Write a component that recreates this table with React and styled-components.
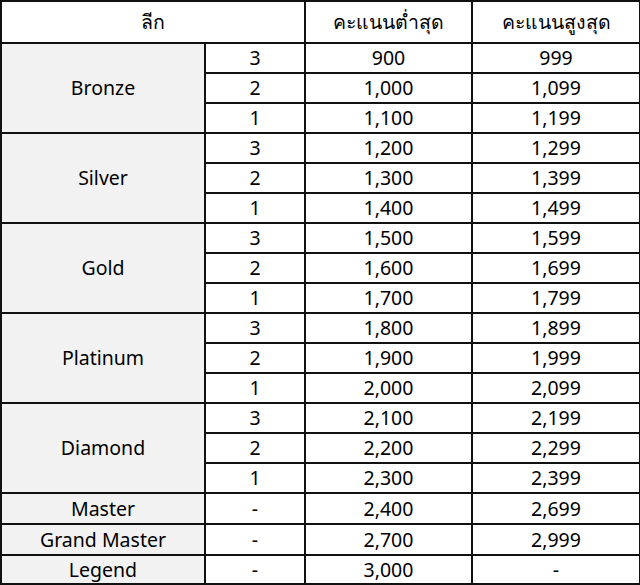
import React from "react";
import styled, { createGlobalStyle } from "styled-components";

const GlobalStyle = createGlobalStyle`
  html, body {
    margin: 0;
    padding: 0;
    background: #ffffff;
  }
  body {
    font-family: "Noto Sans", "Open Sans", sans-serif;
  }
`;

const Table = styled.table`
  width: 639px;
  border-collapse: collapse;
  table-layout: fixed;
  font-size: 19.5px;
  color: #000;
`;

const HeadCell = styled.th`
  height: 40px;
  padding: 0;
  border: 2px solid #111;
  font-weight: 400;
  text-align: center;
  vertical-align: middle;
  background: #fff;
`;

const Row = styled.tr`
  height: ${(props) => props.h || 30}px;
`;

const Cell = styled.td`
  padding: 0;
  border: 2px solid #111;
  text-align: center;
  vertical-align: middle;
  line-height: 24px;
  background: ${(props) => (props.league ? "#f2f2f2" : "#fff")};
`;

const leagues = [
  {
    name: "Bronze",
    tiers: [
      ["3", "900", "999"],
      ["2", "1,000", "1,099"],
      ["1", "1,100", "1,199"],
    ],
  },
  {
    name: "Silver",
    tiers: [
      ["3", "1,200", "1,299"],
      ["2", "1,300", "1,399"],
      ["1", "1,400", "1,499"],
    ],
  },
  {
    name: "Gold",
    tiers: [
      ["3", "1,500", "1,599"],
      ["2", "1,600", "1,699"],
      ["1", "1,700", "1,799"],
    ],
  },
  {
    name: "Platinum",
    tiers: [
      ["3", "1,800", "1,899"],
      ["2", "1,900", "1,999"],
      ["1", "2,000", "2,099"],
    ],
  },
  {
    name: "Diamond",
    tiers: [
      ["3", "2,100", "2,199"],
      ["2", "2,200", "2,299"],
      ["1", "2,300", "2,399"],
    ],
  },
  { name: "Master", h: 31, tiers: [["-", "2,400", "2,699"]] },
  { name: "Grand Master", h: 31, tiers: [["-", "2,700", "2,999"]] },
  { name: "Legend", h: 29, tiers: [["-", "3,000", "-"]] },
];

export default function App() {
  return (
    <>
      <GlobalStyle />
      <Table>
        <colgroup>
          <col style={{ width: 204 }} />
          <col style={{ width: 100 }} />
          <col style={{ width: 167 }} />
          <col style={{ width: 168 }} />
        </colgroup>
        <thead>
          <tr>
            <HeadCell colSpan={2}>ลีก</HeadCell>
            <HeadCell>คะแนนต่ำสุด</HeadCell>
            <HeadCell>คะแนนสูงสุด</HeadCell>
          </tr>
        </thead>
        <tbody>
          {leagues.map((league) =>
            league.tiers.map((tier, i) => (
              <Row key={league.name + i} h={league.h}>
                {i === 0 && (
                  <Cell league rowSpan={league.tiers.length}>
                    {league.name}
                  </Cell>
                )}
                <Cell>{tier[0]}</Cell>
                <Cell>{tier[1]}</Cell>
                <Cell>{tier[2]}</Cell>
              </Row>
            ))
          )}
        </tbody>
      </Table>
    </>
  );
}
